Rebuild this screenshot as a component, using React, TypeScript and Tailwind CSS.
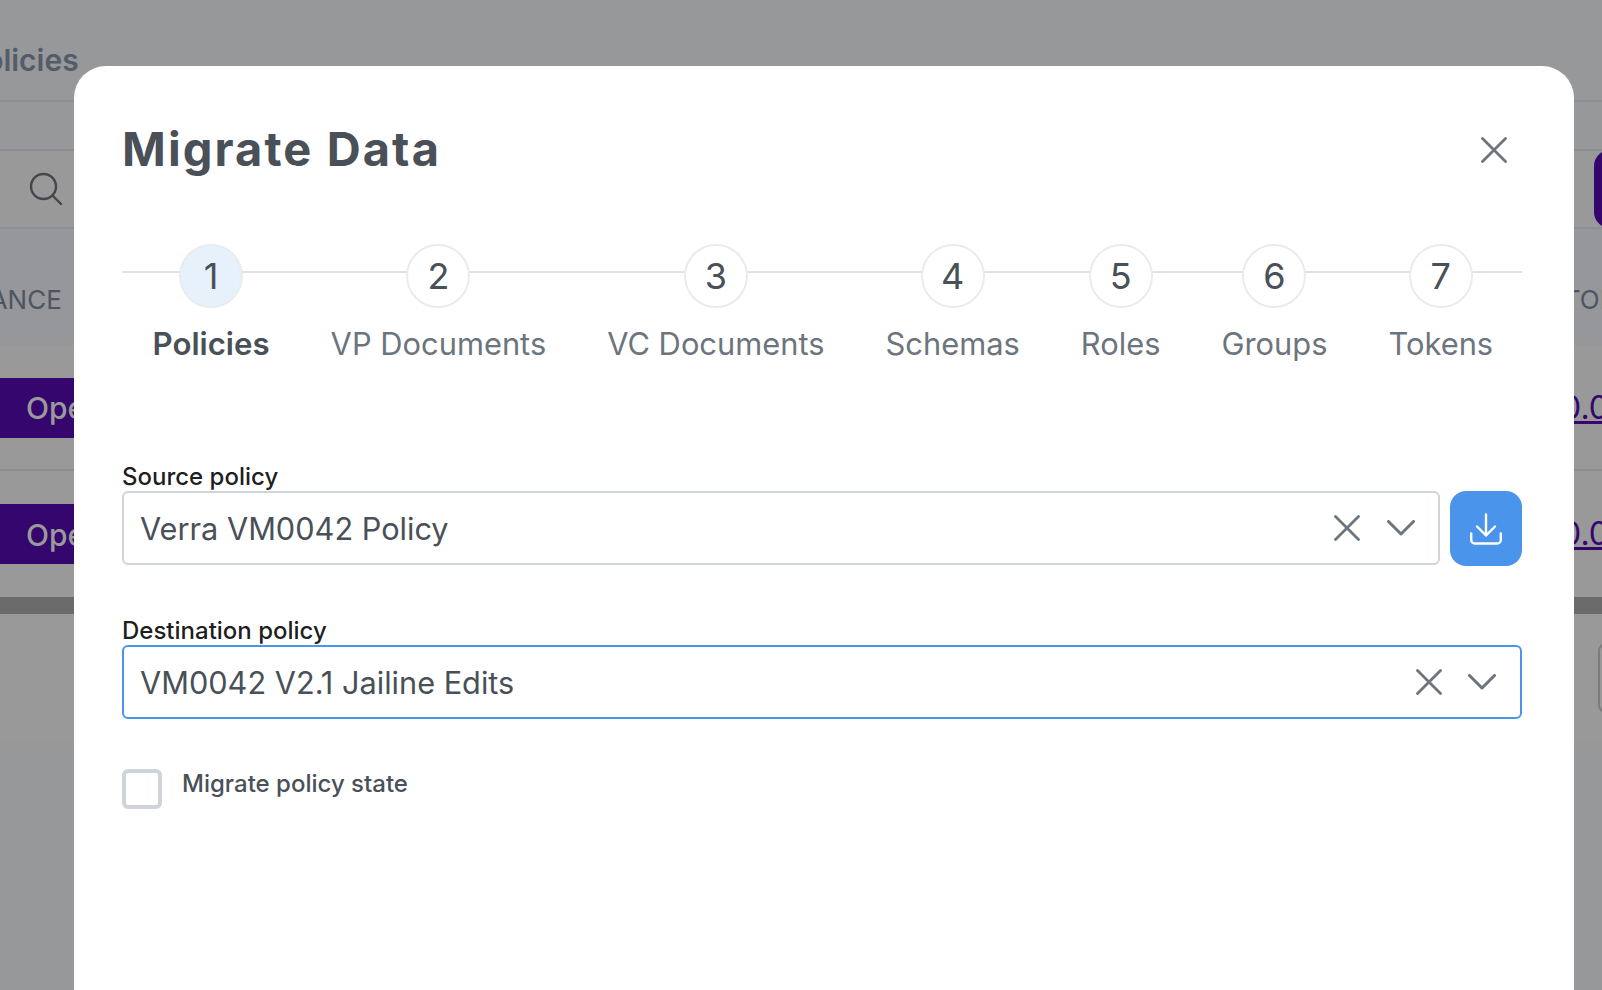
const font = 'font-["Inter",sans-serif]'

const steps = [
  { n: 1, label: 'Policies' },
  { n: 2, label: 'VP Documents' },
  { n: 3, label: 'VC Documents' },
  { n: 4, label: 'Schemas' },
  { n: 5, label: 'Roles' },
  { n: 6, label: 'Groups' },
  { n: 7, label: 'Tokens' },
]

function CrossIcon({ className }: { className: string }) {
  return (
    <svg viewBox="0 0 26 26" fill="none" stroke="currentColor" strokeWidth="2.8" strokeLinecap="round" className={className}>
      <path d="M1.5 1.5 24.5 24.5M24.5 1.5 1.5 24.5" />
    </svg>
  )
}

function ChevronIcon() {
  return (
    <svg viewBox="0 0 28 16" fill="none" stroke="currentColor" strokeWidth="3" strokeLinecap="round" strokeLinejoin="round" className="w-[28px] h-[16px] text-[#6c757d]">
      <path d="M1.5 1.5 14 14 26.5 1.5" />
    </svg>
  )
}

function DownloadIcon() {
  return (
    <svg viewBox="0 0 32 32" fill="none" stroke="white" strokeWidth="2.4" strokeLinecap="round" strokeLinejoin="round" className="w-[32px] h-[32px]">
      <path d="M16 1.5v21M7 13.5l9 9 9-9" />
      <path d="M1.2 20.5v6.5a3.5 3.5 0 0 0 3.5 3.5h22.6a3.5 3.5 0 0 0 3.5-3.5v-6.5" />
    </svg>
  )
}

function PolicySelect({ value, focused }: { value: string; focused?: boolean }) {
  return (
    <div
      className={`flex-1 h-[74px] flex items-center justify-between rounded-md border-2 pl-[16px] ${
        focused ? 'border-[#4a94ec] pr-[24px]' : 'border-[#ced4da] pr-[23px]'
      }`}
    >
      <span className="pt-[2px] text-[30.7px] leading-none text-[#495057]">{value}</span>
      <div className={`flex items-center ${focused ? 'gap-[26px]' : 'gap-[27px]'}`}>
        <CrossIcon className="w-[26px] h-[26px] text-[#6c757d]" />
        <ChevronIcon />
      </div>
    </div>
  )
}

// Dimmed page that sits behind the dialog
function PageBehind() {
  return (
    <div className="text-[#4d5561]">
      <div className="h-[102px] bg-[#97989a] border-b-2 border-[#8b8e93] pt-[40px]">
        <span className="block -ml-[34px] text-[30px] leading-[40px] font-semibold text-[#555c69]">Policies</span>
      </div>
      <div className="h-[49px] bg-[#97989a] border-b-2 border-[#8b8e93]" />
      <div className="h-[78px] bg-[#999999] border-b-2 border-[#8b8e93] flex items-center justify-between pl-[29px]">
        <svg viewBox="0 0 34 34" fill="none" stroke="#43474d" strokeWidth="2.4" strokeLinecap="round" className="w-[34px] h-[34px]">
          <circle cx="14.5" cy="14.5" r="12.5" />
          <path d="M24 24 32 32" />
        </svg>
        <div className="w-[60px] h-[78px] -mr-[52px] rounded-l-2xl bg-[#35076e]" />
      </div>
      <div className="h-[117px] bg-[#96979a] flex items-center justify-between pt-[24px] text-[26px] text-[#4d5561]">
        <span className="-ml-[60px]">BALANCE</span>
        <span className="-mr-[30px]">STORE</span>
      </div>
      <div className="h-[125px] bg-[#999999] border-b-2 border-[#8b8e93] flex items-center justify-between">
        <div className="w-[150px] h-[60px] -ml-[72px] pl-[98px] pt-[2px] bg-[#35076e] flex items-center text-[30px] font-medium text-[#9a9a9a]">Open</div>
        <span className="text-[32px] text-[#35076e] underline -mr-[7px]">0.0</span>
      </div>
      <div className="h-[126px] bg-[#999999] flex items-center justify-between">
        <div className="w-[150px] h-[60px] -ml-[72px] pl-[98px] pt-[2px] bg-[#35076e] flex items-center text-[30px] font-medium text-[#9a9a9a]">Open</div>
        <span className="text-[32px] text-[#35076e] underline -mr-[7px]">0.0</span>
      </div>
      <div className="h-[17px] bg-[#6b6b6b]" />
      <div className="h-[128px] bg-[#999999] flex items-center justify-end">
        <div className="w-[10px] h-[70px] -mr-[6px] rounded-l-lg border-2 border-[#7b7b7b]" />
      </div>
      <div className="h-[248px] bg-[#97989a]" />
    </div>
  )
}

export default function App() {
  return (
    <div className={`relative h-[990px] w-full overflow-hidden ${font}`}>
      <PageBehind />

      <div className="absolute left-[74px] top-[66px] w-[1500px] h-[1000px] rounded-[32px] bg-white pl-[48px] pr-[52px]">
        <div className="flex items-center justify-between pt-[50px]">
          <h1 className="pt-[2px] text-[47px] leading-[62px] font-bold tracking-[2.1px] text-[#495057]">Migrate Data</h1>
          <CrossIcon className="w-[26px] h-[26px] mt-[3px] mr-[15px] text-[#6c757d]" />
        </div>

        {/* Stepper */}
        <div className="relative mt-[64px] flex justify-between">
          <div className="absolute left-0 right-0 top-[27px] h-[2px] bg-[#dee2e6]" />
          {steps.map((step, index) => (
            <div key={step.n} className="relative flex flex-col items-center px-[30.5px]">
              <div
                className={`w-[64px] h-[64px] rounded-full border-2 border-[#e9ecef] flex items-center justify-center text-[36px] leading-none text-[#495057] ${
                  index === 0 ? 'bg-[#e7f1fb]' : 'bg-white'
                }`}
              >
                {step.n}
              </div>
              <span
                className={`mt-[16px] leading-[40px] whitespace-nowrap ${
                  index === 0 ? 'text-[31.2px] font-semibold text-[#495057]' : 'text-[30.85px] text-[#6c757d]'
                }`}
              >
                {step.label}
              </span>
            </div>
          ))}
        </div>

        {/* Form */}
        <div className="mt-[99px]">
          <div className="text-[24px] leading-[28px] font-medium text-black/90">Source policy</div>
          <div className="flex gap-[10px]">
            <PolicySelect value="Verra VM0042 Policy" />
            <button className="w-[72px] h-[75px] rounded-2xl bg-[#4a94ec] flex items-center justify-center">
              <DownloadIcon />
            </button>
          </div>
        </div>
        <div className="mt-[51px]">
          <div className="text-[24px] leading-[28px] font-medium text-black/90">Destination policy</div>
          <div className="flex">
            <PolicySelect value="VM0042 V2.1 Jailine Edits" focused />
          </div>
        </div>
        <div className="mt-[50px] flex items-start gap-[20px]">
          <div className="w-[40px] h-[40px] rounded-md border-4 border-[#ced4da]" />
          <span className="pt-[1px] text-[24px] leading-[28px] font-medium text-[#495057]">Migrate policy state</span>
        </div>
      </div>
    </div>
  )
}
